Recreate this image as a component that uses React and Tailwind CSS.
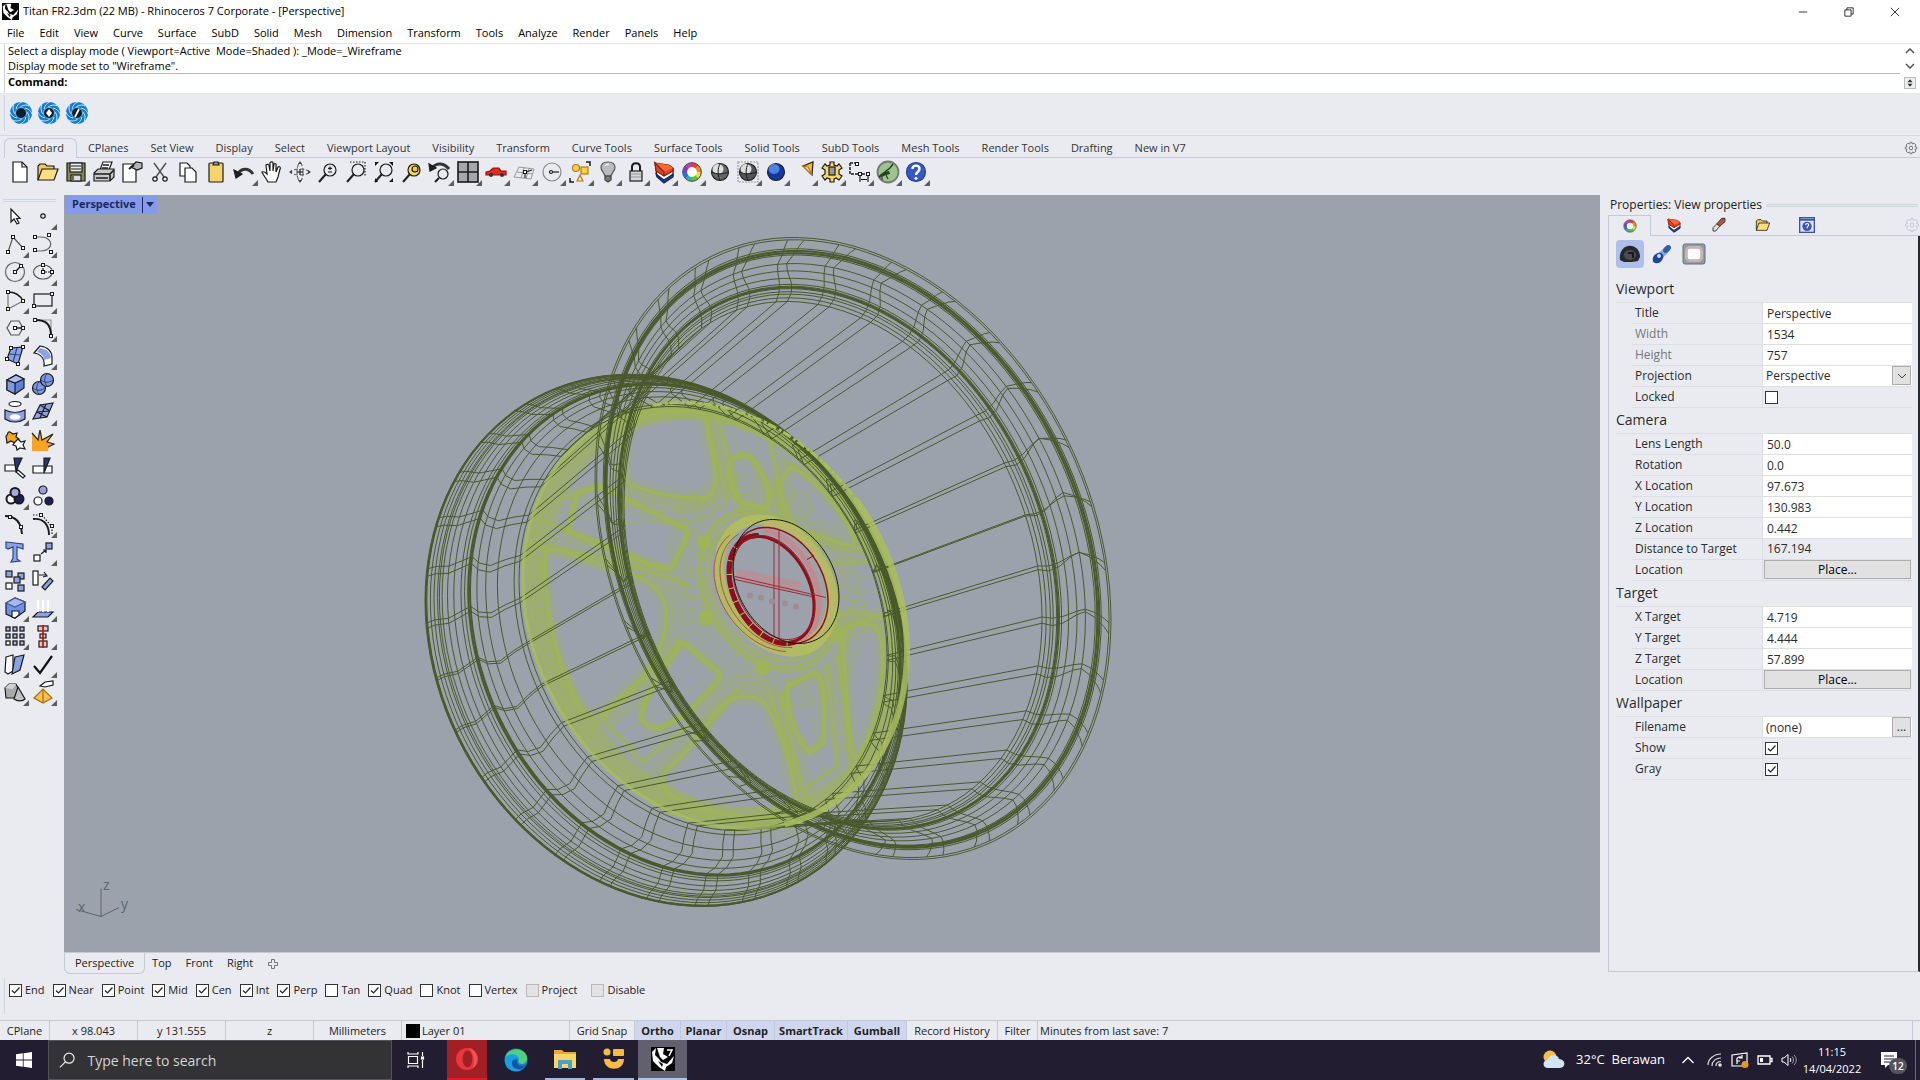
import React from "react";

/* ------------------------------------------------------------------ */
/* Wheel geometry                                                      */
/* ------------------------------------------------------------------ */

const TAU = Math.PI * 2;

const FRONT = [
  { f: 0, e: [666, 641, 241, 266, 0.15] },
  { f: 0.5, e: [685, 630, 215, 245, 0.16] },
  { f: 1, e: [703, 619, 184, 212, 0.18] },
];
const BACK = [
  { f: 0, e: [853, 549, 258, 311, 0.23] },
  { f: 0.2, e: [852, 550, 246, 297, 0.23] },
  { f: 1, e: [833, 562, 209, 260, 0.22] },
];

function ellipseAt(keys, f) {
  let i = 0;
  while (i < keys.length - 2 && f > keys[i + 1].f) i += 1;
  const a = keys[i];
  const b = keys[i + 1];
  const k = (f - a.f) / (b.f - a.f);
  return a.e.map((v, j) => v + (b.e[j] - v) * k);
}

function point([cx, cy, w, h, r], t) {
  const d = Math.acos(r);
  return [cx + w * Math.cos(t), cy + h * Math.cos(t - d)];
}

const fmt = (p) => p[0].toFixed(1) + " " + p[1].toFixed(1);

function ring(e, from = 0, to = TAU) {
  const pts = [];
  for (let i = 0; i <= 120; i += 1) pts.push(fmt(point(e, from + ((to - from) * i) / 120)));
  return "M" + pts.join("L");
}

const frontRings = [0, 0.02, 0.06, 0.1, 0.14, 0.16, 0.19, 0.25, 0.32, 0.4, 0.44, 0.57, 0.66, 0.78, 0.95, 1].map((f) => ring(ellipseAt(FRONT, f)));
const frontHeavy = [0.01, 0.48, 0.5].map((f) => ring(ellipseAt(FRONT, f)));
const backRings = [0, 0.03, 0.15, 0.24, 0.38, 0.5, 0.62, 0.72, 0.75, 0.79, 0.84, 0.88, 0.94, 1].map((f) => ring(ellipseAt(BACK, f)));
const backHeavy = [0.18, 0.21, 0.77].map((f) => ring(ellipseAt(BACK, f)));

const COUNT = 31;
const frontWave = [[0, 0], [0.1, 0.004], [0.25, -0.004], [0.4, 0.01], [0.5, 0.02], [0.58, -0.012], [0.7, -0.03], [0.85, -0.012], [1, 0]];
const backWave = [[1, 0], [0.85, 0.01], [0.7, 0.0], [0.5, -0.03], [0.38, -0.04], [0.25, -0.02], [0.1, 0.01], [0.03, 0.03]];

const ribs = [];
const barrel = [];
for (let i = 0; i < COUNT; i += 1) {
  const base = (i * TAU) / COUNT - 0.4;
  const gap = 0.002 + 0.026 * Math.abs(Math.sin(base + 0.4));
  [-gap, gap].forEach((g) => {
    const t = base + g;
    ribs.push("M" + frontWave.map(([f, w]) => fmt(point(ellipseAt(FRONT, f), t + w))).join("L"));
    ribs.push("M" + backWave.map(([f, w]) => fmt(point(ellipseAt(BACK, f), t + w * (g > 0 ? 1 : 0.6)))).join("L"));
    barrel.push("M" + fmt(point(ellipseAt(FRONT, 1), t)) + "L" + fmt(point(ellipseAt(BACK, 1), t)));
  });
}

const DISC_OUT = [715, 616, 192, 213, 0.17];
const DISC_IN = [718, 614, 172, 195, 0.18];
const discRings = [0, 0.1, 0.22, 0.3, 0.45, 0.55, 0.7, 0.85, 1].map((k) => ring(DISC_OUT.map((v, j) => v + (DISC_IN[j] - v) * k)));

const windows = [
  { c: [672, 455], d: "M632 420C648 414 660 412 677 411L703 413C708 430 712 452 715 473C716 488 714 497 706 498C690 500 650 495 627 483C623 470 623 440 632 420Z" },
  { c: [600, 640], d: "M545 560C545 590 548 610 552 630C560 665 570 692 581 709C587 717 596 719 603 713L640 680C656 664 668 634 666 610C664 596 655 586 640 578L560 551C550 548 546 550 545 560Z" },
  { c: [735, 765], d: "M667 770C690 752 706 724 722 706C736 694 756 694 766 706C780 728 790 762 797 802C797 812 790 816 780 817C740 822 700 812 674 797C660 788 660 778 667 770Z" },
  { c: [860, 680], d: "M843 645C843 630 850 624 862 624L874 626C880 632 884 650 882 672C880 700 872 732 860 755C856 762 852 758 851 750Z" },
  { c: [815, 500], d: "M790 468C808 474 832 498 850 530C858 544 854 548 842 544L800 530C786 520 780 500 782 482Z" },
];
const pockets = [
  "M730 462C738 452 752 454 758 468C766 482 772 498 768 507C760 510 746 506 738 500C732 490 728 474 730 462Z",
  "M577 493L600 487L680 526C690 530 688 536 684 544L672 568C664 572 640 562 626 556L568 532Z",
  "M683 643L718 672C722 678 718 682 712 688L690 712L662 728C650 730 642 724 641 716C644 700 656 682 660 672Z",
  "M788 686L815 673C822 678 824 690 824 702L823 743L810 753C802 746 796 734 792 722C788 708 784 694 788 686Z",
];
const spokes = [
  "M704 414L728 500M716 410L744 520M724 420L770 436M770 436L784 520",
  "M528 545L627 563L690 586M560 500L600 486M540 520L640 560",
  "M606 723L643 763L693 722M590 730L634 690L680 640M700 735L740 688",
  "M780 693L803 792L838 766L826 664M768 690L806 800M838 655L850 752",
  "M852 548L873 552L868 562L820 566M838 630L880 616L896 624M830 622L850 612L892 620",
];
/* isocurves running along each spoke between hub and rim */
const iso = [
  "M712 418L738 520M720 416L750 522M732 432L760 524M744 436L768 520M756 440L780 522M766 440L792 524M776 446L806 524",
  "M536 500C580 510 660 520 712 504M540 508C600 524 670 530 716 514M560 498C620 508 690 512 720 520M530 530L700 576M534 540L704 590M540 550L700 600M560 490L716 540",
  "M600 716L690 640M604 730L700 660M612 740L712 676M626 752L722 690M640 764L738 690M650 750L700 700M596 726L650 700",
  "M776 690L798 790M784 688L812 786M806 690L824 776M816 676L838 764M830 668L846 752M836 660L856 756M828 640C834 700 838 730 842 760",
  "M800 540L870 556M810 552L876 566M826 572L884 580M832 584L890 596M834 598L894 608M838 612L894 616M820 520L872 550M846 640L892 622",
  "M720 690C740 680 760 680 776 700M714 684C740 672 768 674 784 700M650 520C690 534 710 520 730 500M640 500C680 512 712 508 722 490",
];

const bolts = [[704, 543], [706, 618], [762, 668], [836, 634], [812, 540]];
const HUB = [776, 586, 58, 68, 0.3];
const hubRings = [1.18, 1.28, 1.35, 1.5, 1.6, 1.7, 1.8, 1.9].map((k) => ring([774 - k * 4, 588 + k * 2, 52 * k, 60 * k, 0.26]));
const hubWeb = [];
for (let i = 0; i < 58; i += 1) {
  const t = (i * TAU) / 58;
  hubWeb.push("M" + fmt(point(HUB, t)) + "L" + fmt(point([766, 592, 102, 118, 0.24], t + 0.12)));
}

function Wheel() {
  return (
    <svg className="block h-full w-full" viewBox="64 195 1536 758" preserveAspectRatio="xMidYMid slice" role="img" aria-label="Wireframe wheel model">
      <g fill="none" strokeLinejoin="round">
        <g stroke="#9fb35a">
          {discRings.map((d, i) => <path key={i} d={d} strokeWidth={i % 3 === 0 ? 3 : 2} opacity="0.85" />)}
          {windows.map((w, i) => (
            <g key={i}>
              <path d={w.d} strokeWidth="16" opacity="0.22" />
              {[1.06, 1.1, 1.15, 1.22, 1.3].map((k) => (
                <path key={k} d={w.d} strokeWidth="1" opacity="0.6" transform={"translate(" + w.c[0] * (1 - k) + " " + w.c[1] * (1 - k) + ") scale(" + k + ")"} />
              ))}
              <path d={w.d} strokeWidth="3.5" />
            </g>
          ))}
          {pockets.map((d, i) => (
            <g key={i}>
              <path d={d} strokeWidth="12" opacity="0.2" />
              <path d={d} strokeWidth="5" />
            </g>
          ))}
          {spokes.map((d, i) => (
            <g key={i}>
              <path d={d} strokeWidth="3" opacity="0.85" />
              <path d={d} strokeWidth="9" opacity="0.2" />
            </g>
          ))}
          {iso.map((d, i) => <path key={i} d={d} strokeWidth="1" opacity="0.75" />)}
          {hubRings.map((d, i) => <path key={i} d={d} strokeWidth={i < 3 ? 3 : 1} opacity={i < 3 ? 0.9 : 0.6} />)}
          {hubWeb.map((d, i) => <path key={i} d={d} strokeWidth="1" opacity="0.6" />)}
          {bolts.map(([x, y]) => (
            <g key={x + "-" + y}>
              <ellipse cx={x} cy={y} rx="7" ry="8" fill="#9fb35a" />
              <ellipse cx={x} cy={y} rx="14" ry="17" opacity="0.6" />
              <ellipse cx={x - 12} cy={y - 34} rx="11" ry="14" strokeWidth="2" opacity="0.6" />
            </g>
          ))}
        </g>
        <g stroke="#485a2c" strokeWidth="1">
          {barrel.map((d, i) => <path key={i} d={d} />)}
          {ribs.map((d, i) => <path key={i} d={d} />)}
          {frontRings.map((d, i) => <path key={i} d={d} />)}
          {backRings.map((d, i) => <path key={i} d={d} />)}
          {frontHeavy.map((d, i) => <path key={i} d={d} strokeWidth="2" />)}
          {backHeavy.map((d, i) => <path key={i} d={d} strokeWidth="2" />)}
        </g>
        <path d={ring(DISC_OUT, -0.75, 1.2)} stroke="#a9bd62" strokeWidth="6" opacity="0.85" />
        <path d={ring(DISC_OUT, -1.9, -0.7)} stroke="#a9bd62" strokeWidth="3" strokeDasharray="9 3 3 2" />
        <path d={ring(DISC_OUT, 1.2, 4)} stroke="#a9bd62" strokeWidth="3" opacity="0.7" />
        <g>
          <path d={ring([776, 586, 57, 66, 0.28])} stroke="#b0bb62" strokeWidth="10" />
          <path d={ring([780, 584, 50, 60, 0.26], -1.9, 1.4)} stroke="#b8b86a" strokeWidth="7" />
          <path d={ring([774, 587, 45, 56, 0.3], -1.8, 1.6)} stroke="#c9858a" strokeWidth="5" opacity="0.8" />
          <path d={ring([771, 590, 57, 62, 0.3], 1.3, 3.9)} stroke="#b04a3c" strokeWidth="1" />
          <path d={ring([773, 589, 53, 59, 0.3], 1.2, 4)} stroke="#b04a3c" strokeWidth="1" />
          <path d={ring([779, 586, 49, 58, 0.27])} stroke="#8e0f1c" strokeWidth="1.5" />
          <path d={ring([772, 590, 42, 53, 0.33])} stroke="#8e0f1c" strokeWidth="3" />
          <path d={ring([772, 590, 43, 54, 0.33], 1, 4.4)} stroke="#8e0f1c" strokeWidth="5" />
          <path d={ring([772, 590, 43, 54, 0.33], 1.2, 4)} stroke="#b0bb62" strokeWidth="6" strokeDasharray="1 13" />
          <path d={ring([774, 588, 41, 52, 0.33])} stroke="#a01822" strokeWidth="1" />
          <path d="M736 574L800 588" stroke="#c9858a" strokeWidth="11" opacity="0.55" />
          <path d="M735 577L826 598M735 580L812 597M779 530L779 640M774 542L774 638" stroke="#9b2a36" strokeWidth="1" />
          <path d="M807 560L814 556" stroke="#8e0f1c" />
          {[[750, 596], [761, 598], [772, 602], [785, 604], [796, 607]].map(([x, y]) => <circle key={x} cx={x} cy={y} r="3" fill="#a28a92" />)}
          <path d={ring([786, 582, 53, 62, 0.25])} stroke="#141a14" strokeWidth="1" />
        </g>
      </g>
      <g stroke="#5d646c" strokeWidth="1" fill="none">
        <path d="M101 889V917L76 910M101 917L119 908" />
      </g>
      <g fill="#5d646c" fontFamily="'Open Sans', sans-serif" fontSize="14">
        <text x="78" y="912">x</text>
        <text x="121" y="909">y</text>
        <text x="103" y="890">z</text>
      </g>
    </svg>
  );
}

/* ------------------------------------------------------------------ */
/* Icons                                                               */
/* ------------------------------------------------------------------ */

function Ico({ children, className = "h-6 w-6" }) {
  return (
    <svg viewBox="0 0 24 24" className={className} fill="none" stroke="#1b1b1b" strokeWidth="1.2" aria-hidden="true">
      {children}
    </svg>
  );
}

const Handle = ({ x, y, fill = "#fff" }) => <rect x={x - 1.5} y={y - 1.5} width="3" height="3" fill={fill} strokeWidth="1" />;

function ColorWheel({ className }) {
  const colors = ["#e53e2e", "#f08c1c", "#efe12c", "#5cc337", "#22b8a9", "#2f68e0", "#7d37d8", "#d832ae"];
  return (
    <Ico className={className}>
      {colors.map((c, i) => {
        const a = (i * TAU) / 8 - TAU / 4;
        const b = a + TAU / 8 + 0.03;
        return <path key={c} stroke={c} strokeWidth="4" d={`M${12 + 7 * Math.cos(a)} ${12 + 7 * Math.sin(a)}A7 7 0 0 1 ${12 + 7 * Math.cos(b)} ${12 + 7 * Math.sin(b)}`} />;
      })}
      <circle cx="12" cy="12" r="9.3" stroke="#333" strokeWidth="1" />
      <circle cx="12" cy="12" r="4.5" fill="#fff" stroke="none" />
    </Ico>
  );
}

const LayersIcon = ({ className }) => (
  <Ico className={className}>
    <path d="M3 3L5 16L12 22L21 16V9L12 13Z" fill="#fff" />
    <path d="M4 14L12 20L21 14V17L12 23L5 17Z" fill="#24408e" stroke="#16255c" />
    <path d="M3 3L17 5L21 8V11L12 16L4 11Z" fill="#e2441f" stroke="#8c1c0c" />
    <path d="M3 3L17 5L21 8L12 12Z" fill="#f4683a" stroke="none" />
    <path d="M3 3L12 12V16" stroke="#8c1c0c" />
  </Ico>
);

const FolderIcon = ({ className }) => (
  <Ico className={className}>
    <path d="M2 20V6L4 4H9L11 6H18V9" fill="#f4c95c" />
    <path d="M2 20L6 9H22L18 20Z" fill="#ffdf80" />
  </Ico>
);

const Lens = ({ children, glass = "none", handle = "#222" }) => (
  <Ico>
    <path d="M10 14L3 22" strokeWidth="2" stroke={handle} />
    <circle cx="14" cy="10" r="6" fill={glass} />
    {children}
  </Ico>
);

const Ball = ({ light, dark, grid, frame }) => (
  <Ico>
    {frame && <rect x="2" y="2" width="20" height="20" stroke="#9a9a9a" strokeDasharray="2 1" />}
    <circle cx="12" cy="12" r="8.5" fill={dark} stroke="#222" />
    <ellipse cx="10" cy="9" rx="5.5" ry="5" fill={light} stroke="none" opacity="0.8" />
    {grid && <path d="M4 12C8 14.500 16 14.500 20 12M12 4C9.500 8 9.500 16 12 20" strokeWidth="1" />}
  </Ico>
);

const topIcons = [
  ["New", 0, <Ico><path d="M5 2H14L19 7V22H5Z" fill="#fff" /><path d="M14 2V7H19" /></Ico>],
  ["Open", 0, <FolderIcon className="h-6 w-6" />],
  ["Save", 1, <Ico><path d="M3 3H21V21H3Z" fill="#8a8a55" /><rect x="6" y="3" width="12" height="9" fill="#ececec" /><rect x="7" y="15" width="10" height="6" fill="#ddd" /><path d="M9 16V20M7 6H17M7 9H17" /></Ico>],
  ["Print", 0, <Ico><path d="M8 10L11 2H20L17 10" fill="#fff" /><path d="M2 13L6 9H22V17L18 21H2Z" fill="#c9c9c9" /><path d="M2 14H18V21M18 14L22 10M4 18H16M11 5H17M10 8H16" strokeWidth="1.600" /></Ico>],
  ["Document properties", 0, <Ico><path d="M3 4H16V22H3Z" fill="#fff" /><path d="M11 7L16 2L22 3V8L17 10Z" fill="#b4b4b4" /><path d="M9 9L14 5" strokeWidth="2" /></Ico>],
  ["Cut", 0, <Ico><path d="M6 3L16 17M18 3L8 17" stroke="#555" strokeWidth="1.500" /><circle cx="7" cy="19" r="2.200" /><circle cx="17" cy="19" r="2.200" /></Ico>],
  ["Copy", 0, <Ico><path d="M4 3H11L14 6V16H4Z" fill="#fff" /><path d="M9 8H16L20 12V22H9Z" fill="#fff" /></Ico>],
  ["Paste", 0, <Ico><rect x="5" y="3" width="14" height="19" rx="1" fill="#f6d36b" /><path d="M9 5H15L14 2H10Z" fill="#999" /></Ico>],
  ["Undo", 1, <Ico><path d="M5 15C9 8 16 7 21 14" strokeWidth="3" stroke="#333" /><path d="M2 10L4 18L10 14Z" fill="#222" /></Ico>],
  ["Pan", 0, <Ico><path d="M8 22C6 18 3 15 2 12C4 11 6 13 7 14L6 5C7 4 9 4 9 6L10 11V3C11 1 13 2 13 3V11L14 4C15 3 17 4 16 6V12L18 7C20 6 21 8 20 9L18 17L16 22Z" fill="#fff" /></Ico>],
  ["Rotate view", 0, <Ico><ellipse cx="12" cy="12" rx="9" ry="3" stroke="#666" strokeDasharray="4 2" /><ellipse cx="12" cy="12" rx="3" ry="9" stroke="#666" strokeDasharray="4 2" /><path d="M12 9V15M9 12H15" /><path d="M12 1L10 4H14ZM12 23L10 20H14ZM1 12L4 10V14ZM23 12L20 10V14Z" fill="#444" stroke="none" /></Ico>],
  ["Zoom dynamic", 0, <Lens><path d="M14 6.500V10M12 8.300H16M12 12H16" /></Lens>],
  ["Zoom window", 0, <Lens><path d="M6 2H21V17" strokeDasharray="1.500 1.500" /></Lens>],
  ["Zoom extents", 0, <Lens><path d="M3 2H7L3 6ZM21 2H17L21 6ZM21 22H17L21 18ZM3 22V18L6 22Z" fill="#111" stroke="none" /></Lens>],
  ["Zoom selected", 0, <Lens glass="#f1dc5a"><circle cx="15" cy="9" r="3" fill="#f7c93c" /></Lens>],
  ["Undo view change", 1, <Ico><path d="M4 8C9 2 16 3 21 9" strokeWidth="3" stroke="#333" /><path d="M1 4L2 11L8 8Z" fill="#222" /><circle cx="15" cy="14" r="5" /><path d="M11 18L7 22" strokeWidth="2" /></Ico>],
  ["Four viewports", 1, <Ico><rect x="2" y="2" width="20" height="20" fill="#a5a7ac" strokeWidth="1.600" /><path d="M12 2V22M2 12H22" strokeWidth="1.600" /></Ico>],
  ["Viewport car", 1, <Ico><path d="M2 12L6 11L9 8H15L17 11H22V15H2Z" fill="#e02b20" stroke="#8c1611" /><circle cx="7" cy="15" r="2" fill="#333" stroke="none" /><circle cx="18" cy="15" r="2" fill="#333" stroke="none" /></Ico>],
  ["CPlane", 1, <Ico><path d="M2 17L7 7L22 9L19 19ZM5 12L21 14M12 8L9 18M17 8L14 19" stroke="#999" strokeWidth="1" /><Handle x={13} y={12} /><path d="M14 12L20 10M13 14V18" /></Ico>],
  ["Set view", 1, <Ico><circle cx="12" cy="12" r="9" stroke="#888" /><circle cx="11" cy="12" r="1.500" /><path d="M13 12H19" /></Ico>],
  ["Object snap", 1, <Ico><circle cx="8" cy="8" r="3.500" fill="#f7cd4a" stroke="#b37b18" /><rect x="13" y="7" width="7" height="7" fill="#f7cd4a" stroke="#b37b18" /><path d="M9 21L12 15L15 21Z" fill="#fbe6a8" stroke="#b37b18" /><path d="M18 2H22V6M2 18V22H6" strokeWidth="1.500" /></Ico>],
  ["Hide", 1, <Ico><path d="M9 16C8 12 5 11 5 7.500C5 4 8 2 12 2S19 4 19 7.500C19 11 16 12 15 16Z" fill="#b9bbbf" stroke="#555" /><path d="M9 16H15V20L12 22L9 20Z" fill="#777" stroke="#444" /><path d="M9 6C10 4.500 11 4 13 4" stroke="#fff" /></Ico>],
  ["Lock", 1, <Ico><path d="M8 11V7C8 2 16 2 16 7V11" strokeWidth="2" /><rect x="6" y="11" width="12" height="10" fill="#d6d6d6" /><path d="M7 14H17M7 17H17" stroke="#999" /></Ico>],
  ["Layers", 1, <LayersIcon className="h-6 w-6" />],
  ["Properties", 1, <ColorWheel className="h-6 w-6" />],
  ["Shade", 0, <Ball light="#fff" dark="#666" grid />],
  ["Shade options", 1, <Ball light="#fff" dark="#555" grid frame />],
  ["Render", 1, <Ball light="#5c93f5" dark="#1538a0" />],
  ["Spotlight", 1, <Ico><path d="M11 6L21 2L20 15Z" fill="#f8b93a" /><path d="M11 6L20 15L16 7Z" fill="#fff2c0" stroke="#b87a10" /></Ico>],
  ["Options", 1, <Ico><path d="M10 2H14V5L17 6L19 4L22 8L19 10V14L22 16L19 20L16 18L14 19V22H10V19L7 18L5 20L2 16L5 14V10L2 8L5 4L7 6L10 5Z" fill="#f6d66c" /><rect x="9" y="7" width="6" height="8" fill="#999" /></Ico>],
  ["Dimension", 1, <Ico><path d="M2 3H8M2 3V14H10M10 14H19" strokeWidth="1.500" strokeDasharray="3 1" /><Handle x={9} y={4} /><Handle x={12} y={14} /><Handle x={20} y={14} /><path d="M12 16V22M20 16V22M13 19.500H19" /></Ico>],
  ["Grasshopper", 1, <Ico><circle cx="12" cy="12" r="10.500" fill="#9cc48c" stroke="#777" strokeWidth="1.800" /><path d="M3 17C6 13 8 14 10 11L14 8L17 4" stroke="#24421f" strokeWidth="1.500" /><path d="M3 18L8 12L13 11L14 14L10 15Z" fill="#24421f" stroke="none" /><path d="M10 15L12 19M6 15V20" stroke="#24421f" /></Ico>],
  ["Help", 1, <Ico><circle cx="12" cy="12" r="9.500" fill="#3558c8" stroke="#263e94" /><path d="M8.500 9C8.500 4.500 15.500 4.500 15.500 9C15.500 12 12 11.500 12 15" stroke="#fff" strokeWidth="2.400" /><circle cx="12" cy="18.300" r="1.500" fill="#fff" stroke="none" /></Ico>],
];

const BLUE = "#8aa2e6";
const sideIcons = [
  ["Select", 0, <Ico><path d="M8 5V18L11 15L14 20L16 19L13.500 14.500H17Z" fill="#fff" /></Ico>],
  ["Point", 1, <Ico><circle cx="12" cy="12" r="2.200" /></Ico>],
  ["Polyline", 1, <Ico><path d="M5 20L10 5L20 16" stroke="#555" /><Handle x={5} y={20} /><Handle x={10} y={5} /><Handle x={20} y={16} /></Ico>],
  ["Curve", 1, <Ico><path d="M4 5H10C23 5 23 19 10 19H4" stroke="#666" /><Handle x={4} y={5} /><Handle x={18} y={3} /><Handle x={4} y={18} /><Handle x={20} y={20} /></Ico>],
  ["Circle", 1, <Ico><circle cx="12" cy="12" r="9.500" stroke="#666" /><path d="M12 12L18 6" strokeWidth="1.500" /><Handle x={12} y={12} /><Handle x={18} y={6} /></Ico>],
  ["Ellipse", 1, <Ico><ellipse cx="12" cy="12" rx="9.500" ry="7" stroke="#555" /><path d="M12 5V12H21" strokeDasharray="2 1" /><Handle x={12} y={5} /><Handle x={12} y={12} /><Handle x={21} y={12} /></Ico>],
  ["Arc", 1, <Ico><path d="M5 4C12 4 17 7 20 13" strokeWidth="1.500" /><path d="M5 4V21L20 13" stroke="#777" /><Handle x={5} y={4} /><Handle x={20} y={13} /><Handle x={5} y={21} /></Ico>],
  ["Rectangle", 1, <Ico><rect x="3" y="6" width="18" height="12" /><Handle x={21} y={6} /><Handle x={3} y={18} /></Ico>],
  ["Polygon", 1, <Ico><path d="M4 12L8 5H16L20 12L16 19H8Z" stroke="#555" /><path d="M12 12H19" strokeWidth="1.500" /><Handle x={12} y={12} /><Handle x={20} y={12} /></Ico>],
  ["Fillet", 1, <Ico><path d="M4 4H20V20" stroke="#999" /><path d="M4 4C15 4 20 8 20 20" strokeWidth="2" /><Handle x={4} y={4} /><Handle x={20} y={20} /></Ico>],
  ["Surface from points", 1, <Ico><path d="M8 4L20 3L15 20L4 15Z" fill={BLUE} /><path d="M14 4L10 18M6 10L18 11" stroke="#33408c" /><Handle x={8} y={4} /><Handle x={20} y={3} /><Handle x={15} y={20} /><Handle x={4} y={15} /></Ico>],
  ["Surface sweep", 1, <Ico><path d="M3 9L9 2C16 3 21 7 21 14V20L13 22C14 15 10 10 3 9Z" fill="#fff" /><path d="M9 4C16 5 19 8 20 14L13 16C13 12 10 9 6 8Z" fill={BLUE} stroke="none" /></Ico>],
  ["Box", 1, <Ico><path d="M4 8L13 3L21 7V16L12 22L4 18Z" fill="#5f7fdc" /><path d="M4 8L12 11V22L4 18Z" fill="#7f9aea" /><path d="M4 8L13 3L21 7L12 11Z" fill="#a9bcf4" /></Ico>],
  ["Spheres", 1, <Ico><circle cx="8" cy="16" r="6.500" fill="#7f97e0" /><circle cx="16" cy="8" r="6.500" fill="#7f97e0" /><path d="M2 16C6 19 10 19 14 16M8 10C5 13 5 19 8 22M10 8C14 11 18 11 22 8M16 2C13 5 13 11 16 14" stroke="#2b3872" strokeWidth="0.900" /></Ico>],
  ["Solid hole", 1, <Ico><ellipse cx="12" cy="4" rx="6" ry="2.500" fill="#fff" /><path d="M2 10C8 13 16 13 22 10V19C16 23 8 23 2 19Z" fill={BLUE} /><ellipse cx="12" cy="17" rx="5.500" ry="2.800" fill="#fff" stroke="none" /></Ico>],
  ["Mesh surface", 1, <Ico><path d="M2 19L9 5L22 3L16 17Z" fill={BLUE} /><path d="M6 12L19 11M15 4L9 18M9 5L19 11M6 12L16 17" /></Ico>],
  ["Join", 0, <Ico><path d="M3 8C5 8 4 3 7 4L10 6L14 5L13 9L16 11L12 15L8 13L4 15Z" fill="#f5a623" /><path d="M12 14L15 11L18 14L22 13L20 17L22 21L17 20L14 22L13 18L10 17Z" fill="#fff" /></Ico>],
  ["Explode", 0, <Ico><path d="M1 13V23H17L18 18L23 16L16 14L22 6L11 12L9 2L7 12L1 5Z" fill="#f7a426" stroke="none" /><path d="M1 5L7 12L9 2L11 12L22 6L16 14L23 16L17 19" stroke="#222" /></Ico>],
  ["Trim", 0, <Ico><path d="M2 9H14V15H2Z" fill="#fff" /><path d="M15 14L22 20L20 22L13 16Z" fill="#fff" /><path d="M11 2H19L13 15Z" fill="#22397c" /></Ico>],
  ["Split", 0, <Ico><path d="M2 10H21V17H2Z" fill="#fff" /><path d="M13 2H19L13 17Z" fill="#22397c" /></Ico>],
  ["Group", 1, <Ico><circle cx="8" cy="15" r="4.500" fill="#fff" strokeWidth="2" /><circle cx="16" cy="15" r="4.500" fill="#1b1f5a" strokeWidth="2" /><circle cx="12" cy="8.500" r="4.500" fill="#a5a9e2" strokeWidth="2" /></Ico>],
  ["Ungroup", 0, <Ico><circle cx="12" cy="6" r="4" fill="#9a9fda" /><circle cx="7" cy="17" r="4" fill="#fff" /><circle cx="18" cy="17" r="4" fill="#1b1f5a" /></Ico>],
  ["Edit points", 0, <Ico><path d="M2 4C12 4 18 9 19 22" strokeWidth="2" /><Handle x={7} y={5} /><Handle x={18} y={15} /></Ico>],
  ["Control points", 1, <Ico><path d="M2 7C12 6 18 12 18 23" strokeWidth="1.800" /><path d="M2 3H11L21 15V23" strokeDasharray="1.500 1.500" /><Handle x={10} y={3} /><Handle x={21} y={14} /></Ico>],
  ["Text", 0, <Ico><path d="M3 2L20 4V9L17 8L14 7V19L17 21L8 22L10 18V7L5 9L3 8Z" fill={BLUE} stroke="#33427e" /></Ico>],
  ["Move", 1, <Ico><rect x="3" y="15" width="6" height="6" fill="#fff" /><rect x="15" y="3" width="6" height="6" fill={BLUE} /><path d="M10 14L15 10M12 10H15V13" /></Ico>],
  ["Copy objects", 0, <Ico><rect x="3" y="3" width="6" height="6" fill={BLUE} /><rect x="15" y="5" width="6" height="6" fill={BLUE} /><rect x="11" y="9" width="6" height="6" fill={BLUE} /><rect x="3" y="15" width="6" height="6" fill="#fff" /><rect x="15" y="17" width="6" height="6" fill={BLUE} /></Ico>],
  ["Orient", 0, <Ico><rect x="2" y="3" width="5" height="14" fill="#fff" /><path d="M8 7H15M13 4L16 8L12 9" /><path d="M11 19L19 10L22 13L14 22Z" fill={BLUE} /></Ico>],
  ["Boolean", 1, <Ico><path d="M3 7L12 2L22 6V15L12 22L3 18Z" fill="#6f90e6" /><path d="M3 7L12 2L22 6L12 11Z" fill="#a3b9f2" stroke="#4a5a94" /><path d="M9 15H16V19L12 22L9 21Z" fill="#fff" /></Ico>],
  ["Project", 1, <Ico><path d="M2 21L7 16H22L17 21Z" fill={BLUE} /><path d="M7 4V16M12 4V16M17 4V16" stroke="#fff" strokeWidth="2" /></Ico>],
  ["Array", 1, <Ico>{[4, 11, 18].map((y) => [3, 10, 17].map((x) => <rect key={x + "-" + y} x={x} y={y - 1} width="4" height="4" fill={x === 3 && y === 18 ? "#fff" : "#a9b8e8"} strokeWidth="1.300" />))}</Ico>],
  ["Align", 1, <Ico><rect x="7" y="2" width="10" height="5" fill="#f3c0c0" /><rect x="9" y="10" width="6" height="4" fill="#f3c0c0" /><rect x="8" y="17" width="8" height="6" fill="#f3c0c0" /><path d="M12 1V24" stroke="#c01818" strokeWidth="1.800" /></Ico>],
  ["Bend", 1, <Ico><path d="M3 5L10 3V19L5 22L2 20Z" fill="#fff" /><path d="M12 5L21 3L17 18L9 22Z" fill={BLUE} /></Ico>],
  ["Check", 1, <Ico><path d="M3 14L9 21L21 4" strokeWidth="2.200" stroke="#111" /></Ico>],
  ["Mesh solids", 1, <Ico><path d="M2 8L6 4H13L15 8V16L10 18H3Z" fill="#a9a9a9" /><path d="M2 8L6 4H13L10 9Z" fill="#d2d2d2" stroke="none" /><path d="M15 7L22 19C19 22 14 21 11 19Z" fill="#c2c2c2" /></Ico>],
  ["Drag", 1, <Ico><path d="M3 18L12 9L21 18L12 23Z" fill="#f7bf52" stroke="#a86f10" /><path d="M12 9V23" stroke="#a86f10" /><path d="M9 6L14 2L22 1V5L14 7Z" fill="#fff" /></Ico>],
];

function RhinoIcon({ className, seven }) {
  return (
    <svg viewBox="0 0 24 24" className={className} aria-hidden="true">
      <rect width="24" height="24" fill="#060606" />
      <path d="M1 5L5 1L4 8L8 12L10 15L16 17L23 9L21 16L15 20L14 24L8 20L2 14Z" fill="#fff" />
      <path d="M9 10L6 1L13 1L12 7L17 10L12 13Z" fill="#fff" />
      <path d="M7 14L12 17L11 20Z" fill="#060606" />
      {seven && <path d="M16 3H21L18 9" stroke="#fff" strokeWidth="1.500" fill="none" />}
    </svg>
  );
}

function Swirl({ inner, label }) {
  return (
    <button type="button" aria-label={label} className="flex h-7 w-7 items-center justify-center">
      <svg viewBox="0 0 24 24" className="h-6 w-6" fill="none" aria-hidden="true">
        <circle cx="12" cy="12" r="11" fill="#1878d2" />
        {[0, 45, 90, 135, 180, 225, 270, 315].map((a) => <path key={a} d="M13 1C10 2 8 4 7 8" stroke="#a7eaff" strokeWidth="1" transform={"rotate(" + a + " 12 12)"} />)}
        <circle cx="12" cy="12" r="5.500" fill="#111c2c" stroke="#8fdcfa" strokeWidth="0.800" />
        {inner === "diamond" && <path d="M12 8L15 12L12 16L9 12Z" fill="#fff" />}
        {inner === "bolt" && <path d="M14 8L10 16" stroke="#fff" strokeWidth="1.800" />}
      </svg>
    </button>
  );
}

function ToolButton({ label, caret, children }) {
  return (
    <button type="button" title={label} aria-label={label} className="relative flex h-7 w-7 items-center justify-center">
      {children}
      {caret ? (
        <svg viewBox="0 0 6 6" className="absolute right-0 bottom-0 h-1.5 w-1.5" aria-hidden="true">
          <path d="M6 0V6H0Z" fill="#5c5c5c" />
        </svg>
      ) : null}
    </button>
  );
}

/* ------------------------------------------------------------------ */
/* Controls                                                            */
/* ------------------------------------------------------------------ */

function Check({ id, checked, disabled }) {
  return (
    <span className="relative inline-flex h-[13px] w-[13px] shrink-0">
      <input id={id} type="checkbox" defaultChecked={checked} disabled={disabled} className="peer h-[13px] w-[13px] appearance-none border border-[#333] bg-white disabled:border-[#b8b8b8] disabled:bg-[#e3e3e3]" />
      <svg viewBox="0 0 13 13" className="pointer-events-none absolute inset-0 hidden h-[13px] w-[13px] peer-checked:block" fill="none" aria-hidden="true">
        <path d="M3 6.500L5.500 9L10.500 3.500" stroke="#222" strokeWidth="1.200" />
      </svg>
    </span>
  );
}

function Gear({ className }) {
  return (
    <svg viewBox="0 0 16 16" className={className} fill="none" stroke="currentColor" aria-hidden="true">
      <path d="M7 1.500H9L9.500 3.500L11.500 2.500L13.500 4.500L12.500 6.500L14.500 7V9L12.500 9.500L13.500 11.500L11.500 13.500L9.500 12.500L9 14.500H7L6.500 12.500L4.500 13.500L2.500 11.500L3.500 9.500L1.500 9V7L3.500 6.500L2.500 4.500L4.500 2.500L6.500 3.500Z" />
      <circle cx="8" cy="8" r="2" />
    </svg>
  );
}

const menus = ["File", "Edit", "View", "Curve", "Surface", "SubD", "Solid", "Mesh", "Dimension", "Transform", "Tools", "Analyze", "Render", "Panels", "Help"];
const tabs = ["CPlanes", "Set View", "Display", "Select", "Viewport Layout", "Visibility", "Transform", "Curve Tools", "Surface Tools", "Solid Tools", "SubD Tools", "Mesh Tools", "Render Tools", "Drafting", "New in V7"];

const sections = [
  ["Viewport", [["Title", "text", "Perspective"], ["Width", "dim", "1534"], ["Height", "dim", "757"], ["Projection", "select", "Perspective"], ["Locked", "check", false]]],
  ["Camera", [["Lens Length", "text", "50.0"], ["Rotation", "text", "0.0"], ["X Location", "text", "97.673"], ["Y Location", "text", "130.983"], ["Z Location", "text", "0.442"], ["Distance to Target", "plain", "167.194"], ["Location", "button", "Place..."]]],
  ["Target", [["X Target", "text", "4.719"], ["Y Target", "text", "4.444"], ["Z Target", "text", "57.899"], ["Location", "button", "Place..."]]],
  ["Wallpaper", [["Filename", "file", "(none)"], ["Show", "check", true], ["Gray", "check", true]]],
];

function Value({ id, kind, value }) {
  if (kind === "check") return <div className="flex h-5 items-center px-0.5"><Check id={id} checked={value} /></div>;
  if (kind === "button") return <button id={id} type="button" className="mx-px block h-[19px] w-[147px] border border-[#adadad] bg-[#e1e1e1] text-center leading-4 text-black">{value}</button>;
  if (kind === "plain") return <output id={id} className="block h-5 px-1 leading-5">{value}</output>;
  if (kind === "select") {
    return (
      <div className="relative h-5 bg-white">
        <select id={id} defaultValue={value} className="h-5 w-full appearance-none bg-white px-[3px] leading-5">
          <option>{value}</option>
          <option>Parallel</option>
        </select>
        <span className="pointer-events-none absolute top-0 right-px flex h-[19px] w-[19px] items-center justify-center border border-[#adadad] bg-[#e1e1e1]">
          <svg viewBox="0 0 10 6" className="h-1.5 w-2.5" fill="none" stroke="#444" aria-hidden="true"><path d="M1 1L5 5L9 1" /></svg>
        </span>
      </div>
    );
  }
  if (kind === "file") {
    return (
      <div className="flex h-5 bg-white pr-px">
        <input id={id} defaultValue={value} className="h-5 w-full min-w-0 bg-white px-[3px]" />
        <button type="button" aria-label="Browse" className="h-5 w-[19px] shrink-0 border border-[#adadad] bg-[#e1e1e1] leading-4">...</button>
      </div>
    );
  }
  return <input id={id} defaultValue={value} className="block h-5 w-full bg-white px-1" />;
}

function PropertiesPanel() {
  return (
    <aside className="flex w-[312px] shrink-0 flex-col text-[12px] text-[#2b2b2b]">
      <div className="flex h-5 items-center gap-1 px-0.5">
        <h2 className="whitespace-nowrap text-[#222]">Properties: View properties</h2>
        <span className="h-[3px] flex-1 border-y border-[#ccd2de]" />
      </div>
      <div className="flex h-[21px] items-stretch">
        <button type="button" aria-label="Properties" className="flex w-[43px] items-center justify-center border-t border-r border-l border-[#c3c9d6]"><ColorWheel className="h-4 w-4" /></button>
        <div className="flex flex-1 items-center border-b border-[#c3c9d6]">
          <button type="button" aria-label="Layers" className="flex w-[45px] justify-center"><LayersIcon className="h-4 w-4" /></button>
          <button type="button" aria-label="Rendering" className="flex w-[45px] justify-center">
            <Ico className="h-4 w-4"><path d="M3 16L9 10L13 14L7 21H3Z" fill="#e8dcd0" /><path d="M9 10L16 2H21V7L13 14Z" fill="#b7583a" /></Ico>
          </button>
          <button type="button" aria-label="Libraries" className="flex w-[44px] justify-center"><FolderIcon className="h-4 w-4" /></button>
          <button type="button" aria-label="Help" className="flex w-[44px] justify-center">
            <Ico className="h-4 w-4"><rect x="1" y="1" width="22" height="22" fill="#dfe4f5" stroke="#3a52a8" strokeWidth="2" /><path d="M1 4H23" stroke="#3a52a8" strokeWidth="3" /><circle cx="12" cy="14" r="7" fill="#3a58b8" stroke="none" /><path d="M10 12C10 9 14.500 9 14.500 12C14.500 14 12 13.500 12 17" stroke="#fff" strokeWidth="1.800" /></Ico>
          </button>
          <button type="button" aria-label="Panel options" className="ml-auto text-[#c6cad3]"><Gear className="h-4 w-4" /></button>
        </div>
      </div>
      <div className="flex flex-1 flex-col border-r-2 border-b border-l border-r-[#252a33] border-b-[#c3c9d6] border-l-[#c3c9d6] pr-1.5 pl-[7px]">
        <div className="mb-[5px] flex h-9 items-center gap-1">
          <button type="button" aria-label="View" className="flex h-7 w-7 items-center justify-center rounded-sm bg-[#afbfeb]">
            <svg viewBox="0 0 24 24" className="h-6 w-6" aria-hidden="true"><path d="M2 18C1 10 5 5 10 4C17 3 22 8 22 15L20 19L14 20L6 20Z" fill="#26282b" /><ellipse cx="12" cy="13" rx="6" ry="5" fill="#4a4d52" /><path d="M10 11H15V16" stroke="#17181a" strokeWidth="2" fill="none" /></svg>
          </button>
          <button type="button" aria-label="Material" className="flex h-7 w-7 items-center justify-center">
            <svg viewBox="0 0 24 24" className="h-6 w-6" aria-hidden="true"><path d="M3 21L5 14L13 7L19 3L21 5L17 12L10 18Z" fill="#8fa8d4" /><ellipse cx="8" cy="16" rx="6" ry="4.500" fill="#1f449c" transform="rotate(-45 8 16)" /><ellipse cx="17" cy="7" rx="4.500" ry="3" fill="#2f5ab6" transform="rotate(-45 17 7)" /><circle cx="9" cy="14" r="2" fill="#c6dcff" /></svg>
          </button>
          <button type="button" aria-label="Frame" className="flex h-7 w-7 items-center justify-center">
            <svg viewBox="0 0 24 24" className="h-6 w-6" aria-hidden="true"><rect x="1" y="2" width="22" height="20" rx="2" fill="#8f9ea6" stroke="#647078" /><rect x="3" y="4" width="18" height="16" rx="5" fill="#b4bec4" /><rect x="5" y="6" width="14" height="12" rx="3" fill="#fff" stroke="#e0a4a4" strokeWidth="1.500" /></svg>
          </button>
        </div>
        {sections.map(([title, rows]) => (
          <section key={title}>
            <h3 className="h-[26px] border-b border-[#dcdee4] text-[14px] leading-6">{title}</h3>
            {rows.map(([label, kind, value]) => {
              const id = title + "-" + label.replace(/ /g, "-");
              return (
                <div key={label} className="flex h-[21px] pl-4">
                  <label htmlFor={id} className={"min-w-0 flex-1 border-b border-[#dcdee4] pl-[3px] leading-5 " + (kind === "dim" ? "text-[#777]" : "")}>{label}</label>
                  <div className="w-[150px] border-b border-l border-[#dcdee4]"><Value id={id} kind={kind} value={value} /></div>
                </div>
              );
            })}
          </section>
        ))}
      </div>
    </aside>
  );
}

const snaps = [["End", 1], ["Near", 1], ["Point", 1], ["Mid", 1], ["Cen", 1], ["Int", 1], ["Perp", 1], ["Tan", 0], ["Quad", 1], ["Knot", 0], ["Vertex", 0], ["Project", 2], ["Disable", 2]];
const toggles = [["Grid Snap", 0, "w-[65px]"], ["Ortho", 1, "w-[46px]"], ["Planar", 1, "w-[46px]"], ["Osnap", 1, "w-[48px]"], ["SmartTrack", 1, "w-[73px]"], ["Gumball", 1, "w-[59px]"], ["Record History", 0, "w-[91px]"], ["Filter", 0, "w-[40px]"]];

function Taskbar() {
  return (
    <footer className="flex h-10 items-stretch bg-[#221d30] text-[12px] text-white">
      <button type="button" aria-label="Start" className="flex w-12 items-center justify-center">
        <svg viewBox="0 0 16 16" className="h-4 w-4" fill="#fff" aria-hidden="true"><path d="M0 2.200L6.800 1.300V7.600H0ZM7.600 1.200L16 0V7.600H7.600ZM0 8.400H6.800V14.700L0 13.800ZM7.600 8.400H16V16L7.600 14.800Z" /></svg>
      </button>
      <label className="flex w-[344px] items-center gap-3 border border-[#555358] bg-[#333335] pl-2.5">
        <svg viewBox="0 0 18 18" className="h-[18px] w-[18px]" fill="none" stroke="#eee" strokeWidth="1.300" aria-hidden="true"><circle cx="11" cy="7" r="5.500" /><path d="M7 11L1 17" /></svg>
        <input aria-label="Search" placeholder="Type here to search" className="w-full min-w-0 bg-transparent text-[14px] placeholder:text-[#d4d4d4]" />
      </label>
      <button type="button" aria-label="Task view" className="flex w-12 items-center justify-center">
        <svg viewBox="0 0 18 18" className="h-[18px] w-[18px]" fill="none" stroke="#fff" strokeWidth="1.200" aria-hidden="true"><path d="M1 1V3H11V1M1 17V15H11V17M1.500 5.500H10.500V12.500H1.500ZM15.500 1V5M15.500 9V17" /><rect x="14.500" y="6" width="2" height="2" fill="#fff" /></svg>
      </button>
      <div className="flex">
        <button type="button" aria-label="Opera" className="ml-[7px] flex w-10 items-center justify-center border-b-2 border-[#e01b22] bg-[#a31f26]">
          <svg viewBox="0 0 24 24" className="h-6 w-6" fill="none" aria-hidden="true"><circle cx="12" cy="12" r="11" fill="#e8383c" /><ellipse cx="12.500" cy="12" rx="5" ry="8.500" fill="#a31f26" /><path d="M14 1C23 3 25 16 18 21C20 15 20 8 14 1Z" fill="#ee5558" /></svg>
        </button>
        <button type="button" aria-label="Edge" className="flex w-[58px] items-center justify-center">
          <svg viewBox="0 0 24 24" className="h-6 w-6" aria-hidden="true"><circle cx="12" cy="12" r="11.500" fill="#1b7fd0" /><path d="M1 10C3 1 15-2 21 5C25 10 23 16 18 16C14 16 14 13 15 11C14 6 6 5 1 10Z" fill="#4fd07c" /><path d="M1 10C6 4 14 6 15 11C12 9 8 11 8 15C8 20 13 22 18 21C12 26 2 22 1 14Z" fill="#1a9fe0" /><path d="M8 15C8 20 13 22 18 21L22 17C18 19 12 18 13 12C10 11 8 12 8 15Z" fill="#1557a6" /></svg>
        </button>
        <button type="button" aria-label="File Explorer" className="flex w-10 items-center justify-center border-b-2 border-[#9fbbe0]">
          <svg viewBox="0 0 24 24" className="h-6 w-6" aria-hidden="true"><path d="M1 3H9L11 5H23V21H1Z" fill="#e9a935" /><path d="M1 7H23V21H1Z" fill="#fbd567" /><path d="M5 13H19V22H15V17H9V22H5Z" fill="#4aa0c8" /></svg>
        </button>
        <button type="button" aria-label="Smile" className="ml-2 flex w-[41px] items-center justify-center border-b-2 border-[#9fbbe0]">
          <svg viewBox="0 0 24 24" className="h-6 w-6" aria-hidden="true"><circle cx="5" cy="5" r="3.500" fill="#f5bd45" /><rect x="11" y="2" width="11" height="7" rx="1" fill="#f5bd45" /><path d="M2 12H8C8 16 16 16 16 12H22C22 25 2 25 2 12Z" fill="#f5bd45" /></svg>
        </button>
        <button type="button" aria-label="Rhinoceros" className="ml-1 flex w-[49px] items-center justify-center border-b-2 border-[#a9c6ea] bg-[#625f6f]"><RhinoIcon className="h-6 w-6" seven /></button>
      </div>
      <div className="ml-auto flex items-center">
        <button type="button" className="flex items-center gap-2.5 text-[13px]">
          <svg viewBox="0 0 24 20" className="h-5 w-6" aria-hidden="true"><circle cx="8" cy="7" r="6.500" fill="#f6bd4c" /><path d="M6 18C0 18 0 10 6 10C7 4 16 4 17 9C24 9 24 18 18 18Z" fill="#cfe7f5" /></svg>
          <span>32°C&nbsp; Berawan</span>
        </button>
        <div className="ml-4 flex items-center gap-2">
          <svg viewBox="0 0 14 16" className="h-4 w-3.5" fill="none" stroke="#fff" strokeWidth="1.300" aria-hidden="true"><path d="M1.500 11L7 5.500L12.500 11" /></svg>
          <svg viewBox="0 0 16 16" className="ml-1 h-4 w-4" fill="none" stroke="#ddd" strokeWidth="1.200" aria-hidden="true"><path d="M1 13C1 7 7 2 14 2M5 14C5 9 9 6 14 6M9 14C9 11 11 9.500 14 9.500" /><circle cx="13" cy="13" r="1.200" fill="#fff" /></svg>
          <svg viewBox="0 0 18 16" className="h-4 w-[18px]" fill="none" stroke="#fff" strokeWidth="1.200" aria-hidden="true"><path d="M1 3L16 1V14H1ZM6 9C5 5 9 4 11 6M11 3V6H8M6 12V9H9" /><circle cx="14" cy="12.500" r="3.500" fill="#e39a1f" stroke="none" /></svg>
          <svg viewBox="0 0 16 16" className="h-4 w-4" fill="none" stroke="#fff" strokeWidth="1.300" aria-hidden="true"><path d="M1 4H13V12H1ZM13 6.500H15V9.500H13" /><rect x="3" y="6" width="3" height="4" fill="#fff" stroke="none" /></svg>
          <svg viewBox="0 0 16 16" className="h-4 w-4" fill="none" stroke="#fff" aria-hidden="true"><path d="M1 6H3L7 2.500V13.500L3 10H1ZM9 6C10 7 10 9 9 10" /><path d="M11 4.500C13 6 13 10 11 11.500M13 3C16 6 16 10 13 13" stroke="#99a" /></svg>
        </div>
        <div className="ml-1 w-[62px] text-center text-[11px] leading-[17px]">
          <div>11:15</div>
          <div className="whitespace-nowrap">14/04/2022</div>
        </div>
        <button type="button" aria-label="12 notifications" className="relative mr-2.5 ml-[18px] h-6 w-6">
          <svg viewBox="0 0 24 24" className="h-6 w-6" aria-hidden="true"><path d="M0 4H16V17H7L4 20V17H0Z" fill="#fff" /><path d="M3 8H13M3 11H13M3 14H9" stroke="#221d30" /></svg>
          <span className="absolute top-2.5 left-2 flex h-4 w-[18px] items-center justify-center rounded-full bg-[#55535c] text-[10px] font-semibold">12</span>
        </button>
        <span className="mr-1 h-10 w-px bg-[#6b6877]" />
      </div>
    </footer>
  );
}

/* ------------------------------------------------------------------ */
/* Application window                                                  */
/* ------------------------------------------------------------------ */

export default function App() {
  return (
    <div className="flex h-screen min-h-[720px] flex-col overflow-hidden bg-[#e9ebf0] font-['Open_Sans','Noto_Sans',sans-serif] text-[11px] text-[#222]">
      <header className="bg-white">
        <div className="flex h-[23px] items-center text-[11px] text-black">
          <RhinoIcon className="mx-0.5 h-[17px] w-[17px]" />
          <h1 className="pl-0.5">Titan FR2.3dm (22 MB) - Rhinoceros 7 Corporate - [Perspective]</h1>
          <div className="ml-auto flex">
            {[["Minimize", "M1 6H11"], ["Restore", "M1 3.500H8.500V11H1ZM3.500 3.500V1H11V8.500H8.500"], ["Close", "M1 1L11 11M11 1L1 11"]].map(([l, d]) => (
              <button key={l} type="button" aria-label={l} className="flex h-5 w-[46px] items-center justify-center">
                <svg viewBox="0 0 12 12" className="h-2.5 w-2.5" fill="none" stroke="#111" aria-hidden="true"><path d={d} /></svg>
              </button>
            ))}
            <span className="w-0.5" />
          </div>
        </div>
        <nav className="flex h-5 items-center text-black">
          {menus.map((m) => <button key={m} type="button" className="pr-2 pl-[7px]">{m}</button>)}
        </nav>
      </header>

      <div className="flex h-[51px] border-t border-b border-[#e4e6ea] bg-white pl-1">
        <div className="flex min-w-0 flex-1 flex-col border-l border-[#cdd2dc] pl-0.5 text-[11px] leading-[15px] text-black">
          <p className="px-px leading-[14px] whitespace-pre">Select a display mode ( Viewport=Active  Mode=Shaded ): _Mode=_Wireframe</p>
          <p className="border-b border-[#b5b8bf] px-px">Display mode set to "Wireframe".</p>
          <label className="flex px-px font-bold"><span>Command:</span><input aria-label="Command" className="min-w-0 flex-1 pl-1 font-normal outline-none" /></label>
        </div>
        <div className="flex w-5 flex-col items-center justify-between py-1 text-[#555]">
          {["M1 5L5 1L9 5", "M1 1L5 5L9 1"].map((d) => <svg key={d} viewBox="0 0 10 6" className="h-1.5 w-2.5" fill="none" stroke="currentColor" strokeWidth="1.500" aria-hidden="true"><path d={d} /></svg>)}
          <svg viewBox="0 0 12 12" className="h-3 w-3 border border-[#bbb] bg-[#eee]" fill="#333" aria-hidden="true"><path d="M3 5L6 1.500L9 5ZM3 7L6 10.500L9 7Z" /></svg>
        </div>
      </div>

      <div className="flex h-[42px] items-start border-b border-[#d5d8e0] pt-px pl-1">
        <div className="flex h-9 items-center border-l border-[#d0d4dd] pl-0.5">
          <Swirl label="Camera" />
          <Swirl label="Add" inner="diamond" />
          <Swirl label="Flash" inner="bolt" />
        </div>
      </div>

      <div className="flex h-[22px] items-stretch pl-1 text-[#333]">
        <button type="button" className="mt-0.5 rounded-t-md border border-b-0 border-[#c3c9d6] px-3">Standard</button>
        <div className="flex flex-1 items-center border-b border-[#c3c9d6] pt-[3px]">
          {tabs.map((t) => <button key={t} type="button" className="px-[11px] whitespace-nowrap">{t}</button>)}
          <button type="button" aria-label="Toolbar options" className="mr-0.5 ml-auto text-[#666]"><Gear className="h-3.5 w-3.5" /></button>
        </div>
      </div>

      <div className="flex h-[37px] items-start pl-1.5">
        {topIcons.map(([label, caret, icon]) => <ToolButton key={label} label={label} caret={caret}>{icon}</ToolButton>)}
      </div>

      <main className="flex min-h-0 flex-1">
        <div className="w-16 shrink-0 pt-1 pl-px">
          <div className="mr-2 ml-0.5 h-[3px] border-y border-[#cfd6e2]" />
          <div className="grid w-14 grid-cols-2">
            {sideIcons.map(([label, caret, icon]) => <ToolButton key={label} label={label} caret={caret}>{icon}</ToolButton>)}
          </div>
        </div>
        <div className="flex min-w-0 flex-1 flex-col">
          <div className="relative min-h-0 flex-1 border-b border-[#c3c9d6] bg-[#9ca2ab]">
            <Wheel />
            <button type="button" className="absolute top-0 left-px flex h-[19px] items-center bg-[#859aeb] pl-[7px] text-[11px] font-bold text-[#1c2a5c]">
              Perspective
              <span className="ml-1.5 h-4 w-px bg-[#1c2a5c]" />
              <svg viewBox="0 0 8 5" className="mx-[3px] h-[5px] w-2" fill="#1c2a5c" aria-hidden="true"><path d="M0 0H8L4 5Z" /></svg>
            </button>
          </div>
          <div className="flex h-[21px] items-stretch">
            <button type="button" className="rounded-b-md border border-t-0 border-[#c3c9d6] px-2.5">Perspective</button>
            {["Top", "Front", "Right"].map((t) => <button key={t} type="button" className="px-[7px]">{t}</button>)}
            <button type="button" aria-label="Add viewport" className="flex items-center px-2">
              <svg viewBox="0 0 10 10" className="h-2.5 w-2.5" fill="none" stroke="#777" aria-hidden="true"><path d="M3.500 .5H6.500V3.500H9.500V6.500H6.500V9.500H3.500V6.500H.5V3.500H3.500Z" /></svg>
            </button>
          </div>
        </div>
        <div className="flex h-full pb-0.5 pl-2">
          <PropertiesPanel />
        </div>
      </main>

      <div className="flex h-[46px] items-start pt-1 pl-1">
        <div className="flex h-9 items-start gap-2 border-l border-[#d0d4dd] pt-1 pl-1">
          {snaps.map(([s, c]) => (
            <label key={s} className={"flex items-center gap-[3px] " + (c === 2 ? "mr-1.5 gap-1" : "")}>
              <Check checked={c === 1} disabled={c === 2} />
              {s}
            </label>
          ))}
        </div>
      </div>

      <div className="flex h-5 items-stretch border-t border-[#c3c9d6] text-center leading-[19px] whitespace-nowrap">
        <button type="button" className="w-[50px] border-r border-[#c3c9d6]">CPlane</button>
        <div className="w-22 border-r border-[#c3c9d6]">x 98.043</div>
        <div className="w-22 border-r border-[#c3c9d6]">y 131.555</div>
        <div className="w-22 border-r border-[#c3c9d6]">z</div>
        <button type="button" className="w-22 border-r border-[#c3c9d6]">Millimeters</button>
        <button type="button" className="flex w-[168px] items-center gap-0.5 border-r border-[#c3c9d6] pl-1"><span className="h-3.5 w-3.5 bg-black" />Layer 01</button>
        {toggles.map(([t, on, w]) => <button key={t} type="button" className={w + " border-r border-[#c3c9d6] " + (on ? "bg-[#cfd7ee] font-bold" : "")}>{t}</button>)}
        <div className="px-0.5">Minutes from last save: 7</div>
        <span className="mr-[7px] ml-auto w-px bg-[#c3c9d6]" />
      </div>

      <Taskbar />
    </div>
  );
}
